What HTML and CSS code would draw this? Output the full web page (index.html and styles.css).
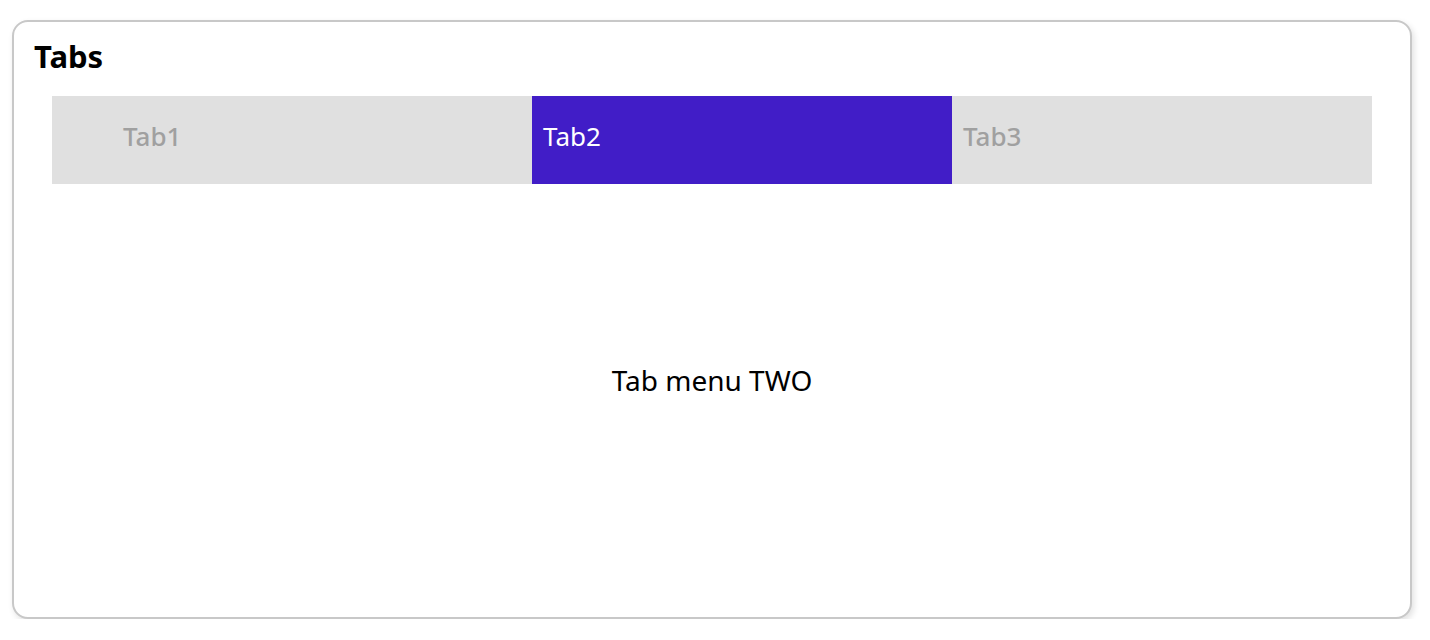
FILE: index.html
```html
<!DOCTYPE html>
<html>
<head>
<meta charset="utf-8">
<link rel="stylesheet" href="styles.css">
</head>
<body>
<div class="card">
  <h2 class="title">Tabs</h2>
  <ul class="tabs">
    <li class="tab">Tab1</li>
    <li class="tab active">Tab2</li>
    <li class="tab">Tab3</li>
  </ul>
  <div class="content">Tab menu TWO</div>
</div>
</body>
</html>
```
FILE: styles.css
```css
html, body {
  margin: 0;
  padding: 0;
  background: #ffffff;
}
body {
  font-family: "Noto Sans", sans-serif;
  padding: 20px 18px 0 12px;
}
.card {
  box-sizing: border-box;
  height: 599px;
  border: 2px solid #c8c8c8;
  border-radius: 16px;
  box-shadow: 2px 3px 6px rgba(0,0,0,0.12);
  background: #fff;
  padding: 0 38px;
  display: flex;
  flex-direction: column;
}
.title {
  margin: 14px 0 0 -18px;
  font-size: 31px;
  font-weight: 700;
  line-height: 40px;
  color: #000;
}
.tabs {
  list-style: none;
  margin: 20px 0 0 0;
  padding: 0 0 0 60px;
  display: flex;
  height: 88px;
  background: #e0e0e0;
}
.tab {
  width: 420px;
  box-sizing: border-box;
  padding: 22px 0 0 11px;
  font-size: 26px;
  line-height: 36px;
  color: #a0a0a0;
  font-weight: 500;
}
.tab.active {
  background: #411dc7;
  color: #ffffff;
  font-weight: 400;
}
.content {
  text-align: center;
  font-size: 28px;
  color: #000;
  margin-top: 177px;
}
```
